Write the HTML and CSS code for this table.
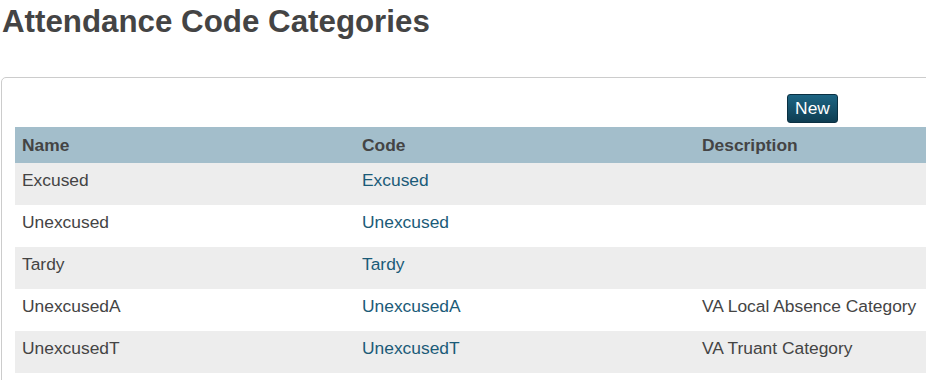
FILE: index.html
```html
<!DOCTYPE html>
<html lang="en">
<head>
<meta charset="utf-8">
<title>Attendance Code Categories</title>
<link rel="stylesheet" href="styles.css">
</head>
<body>
<div class="page">
  <h1 class="page-title">Attendance Code Categories</h1>
  <div class="panel">
    <div class="toolbar">
      <button class="btn-new" type="button">New</button>
    </div>
    <table class="grid">
      <thead>
        <tr>
          <th>Name</th>
          <th>Code</th>
          <th>Description</th>
        </tr>
      </thead>
      <tbody>
        <tr><td>Excused</td><td><a href="#">Excused</a></td><td></td></tr>
        <tr><td>Unexcused</td><td><a href="#">Unexcused</a></td><td></td></tr>
        <tr><td>Tardy</td><td><a href="#">Tardy</a></td><td></td></tr>
        <tr><td>UnexcusedA</td><td><a href="#">UnexcusedA</a></td><td>VA Local Absence Category</td></tr>
        <tr><td>UnexcusedT</td><td><a href="#">UnexcusedT</a></td><td>VA Truant Category</td></tr>
      </tbody>
    </table>
  </div>
</div>
</body>
</html>
```

FILE: styles.css
```css
html, body {
  margin: 0;
  padding: 0;
  background: #ffffff;
  overflow: hidden;
}

body {
  font-family: "Liberation Sans", Arial, sans-serif;
  font-size: 17.4px;
  color: #444444;
}

.page {
  padding-left: 1px;
  width: 1200px;
}

.page-title {
  margin: 0 0 0 1px;
  padding-top: 4px;
  font-size: 31.3px;
  line-height: 36px;
  font-weight: bold;
  color: #444444;
  height: 77px;
  box-sizing: border-box;
}

.panel {
  border: 1px solid #cccccc;
  border-radius: 5px;
  padding: 16px 13px 20px 13px;
  width: 1100px;
}

.toolbar {
  width: 823px;
  display: flex;
  justify-content: flex-end;
  margin-bottom: 4px;
}

.btn-new {
  font-family: "Liberation Sans", Arial, sans-serif;
  font-size: 17.4px;
  color: #ffffff;
  height: 29px;
  width: 51px;
  padding: 0;
  border: 1px solid #0a3042;
  border-radius: 3px;
  background: linear-gradient(to bottom, #1d6583 0%, #0e3d52 100%);
  cursor: pointer;
}

.grid {
  border-collapse: collapse;
  width: 1020px;
  table-layout: fixed;
}

.grid th,
.grid td {
  width: 340px;
  box-sizing: border-box;
  text-align: left;
  padding: 0 7px;
  white-space: nowrap;
}

.grid th {
  background: #a3becb;
  height: 36px;
  font-weight: bold;
  color: #444444;
  vertical-align: middle;
}

.grid td {
  height: 42px;
  padding-bottom: 7px;
  vertical-align: middle;
  color: #444444;
}

.grid tbody tr:nth-child(odd) td {
  background: #ededed;
}

.grid a {
  color: #1b5b78;
  text-decoration: none;
}
```
